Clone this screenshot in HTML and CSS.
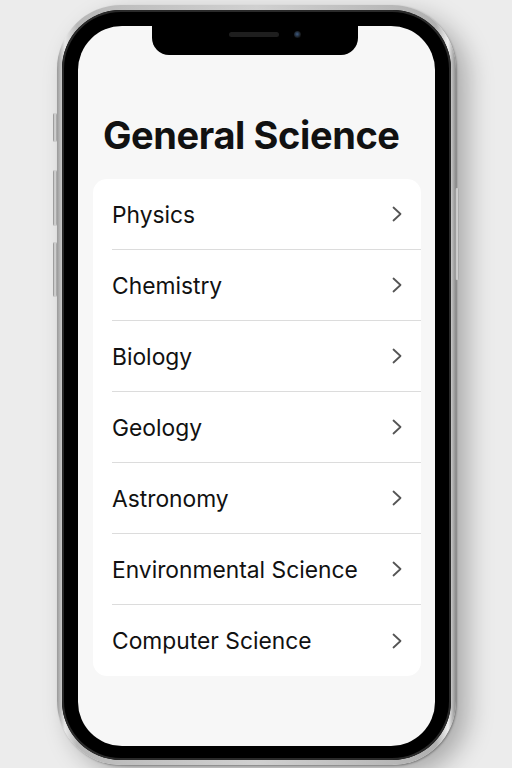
FILE: index.html
```html
<!DOCTYPE html>
<html lang="en">
  <head>
    <meta charset="UTF-8" />
    <meta name="viewport" content="width=device-width, initial-scale=1.0" />
    <title>General Science</title>
    <link rel="stylesheet" href="styles.css">
  </head>
  <body>
    <section class="phone">
      <span class="side-btn btn-mute"></span>
      <span class="side-btn btn-vol-up"></span>
      <span class="side-btn btn-vol-down"></span>
      <span class="side-btn btn-power"></span>
      <section class="bezel">
        <section class="screen">
          <div class="notch">
            <span class="speaker"></span>
            <span class="camera"></span>
          </div>
          <h1 class="title">General Science</h1>
          <ul class="list">
            <li class="row"><span>Physics</span><svg class="chev" viewBox="0 0 10 16"><path d="M1.5 1.5 L8.5 8 L1.5 14.5" /></svg></li>
            <li class="row"><span>Chemistry</span><svg class="chev" viewBox="0 0 10 16"><path d="M1.5 1.5 L8.5 8 L1.5 14.5" /></svg></li>
            <li class="row"><span>Biology</span><svg class="chev" viewBox="0 0 10 16"><path d="M1.5 1.5 L8.5 8 L1.5 14.5" /></svg></li>
            <li class="row"><span>Geology</span><svg class="chev" viewBox="0 0 10 16"><path d="M1.5 1.5 L8.5 8 L1.5 14.5" /></svg></li>
            <li class="row"><span>Astronomy</span><svg class="chev" viewBox="0 0 10 16"><path d="M1.5 1.5 L8.5 8 L1.5 14.5" /></svg></li>
            <li class="row"><span>Environmental Science</span><svg class="chev" viewBox="0 0 10 16"><path d="M1.5 1.5 L8.5 8 L1.5 14.5" /></svg></li>
            <li class="row"><span>Computer Science</span><svg class="chev" viewBox="0 0 10 16"><path d="M1.5 1.5 L8.5 8 L1.5 14.5" /></svg></li>
          </ul>
        </section>
      </section>
    </section>
  </body>
</html>
```

FILE: styles.css
```css
body {
  margin: 0;
  width: 512px;
  height: 768px;
  overflow: hidden;
  background: #ececec;
  font-family: Inter, "Noto Sans", sans-serif;
  display: flex;
  justify-content: center;
  padding-top: 5px;
  box-sizing: border-box;
}
.phone {
  position: relative;
  width: 399px;
  height: 760px;
  padding: 5px;
  box-sizing: border-box;
  border-radius: 64px;
  background: linear-gradient(90deg, #9a9a9a, #e8e8e8 2%, #b8b8b8 5%, #d0d0d0 50%, #b0b0b0 95%, #eeeeee 98%, #8a8a8a);
  box-shadow: 12px 10px 26px rgba(0, 0, 0, 0.28), 1px 1px 2px rgba(0, 0, 0, 0.3);
  margin-left: 1px;
}
.side-btn {
  position: absolute;
  width: 4px;
  background: linear-gradient(90deg, #888, #e0e0e0, #999);
  border-radius: 2px;
}
.btn-mute { left: -4px; top: 108px; height: 29px; }
.btn-vol-up { left: -4px; top: 165px; height: 56px; }
.btn-vol-down { left: -4px; top: 237px; height: 55px; }
.btn-power { right: -3px; top: 183px; height: 92px; }
.bezel {
  height: 100%;
  box-sizing: border-box;
  padding: 16px 16px 14px;
  background: #000;
  border-radius: 59px;
  box-shadow: inset 0 0 0 2px #2a2a2a;
}
.screen {
  position: relative;
  height: 100%;
  background: #f7f7f7;
  border-radius: 44px;
  overflow: hidden;
}
.notch {
  position: absolute;
  top: 0;
  left: 74px;
  width: 206px;
  height: 29px;
  background: #000;
  border-radius: 0 0 17px 17px;
}
.speaker {
  position: absolute;
  left: 77px;
  top: 6px;
  width: 50px;
  height: 5px;
  border-radius: 3px;
  background: #1e1e1e;
}
.camera {
  position: absolute;
  left: 142px;
  top: 5px;
  width: 7px;
  height: 7px;
  border-radius: 50%;
  background: radial-gradient(circle at 45% 45%, #3d5a80, #111 70%);
}
.title {
  margin: 86px 0 0 25px;
  font-size: 38px;
  line-height: 46px;
  font-weight: 700;
  color: #111;
  letter-spacing: -0.4px;
}
.list {
  list-style: none;
  margin: 21px 14px 0 15px;
  padding: 0;
  background: #fff;
  border-radius: 14px;
}
.row {
  height: 71px;
  box-sizing: border-box;
  margin-left: 19px;
  padding-right: 19px;
  display: flex;
  align-items: center;
  justify-content: space-between;
  font-size: 22.8px;
  color: #111;
  border-bottom: 1px solid #dcdcdc;
}
.row:last-child {
  border-bottom: none;
}
.chev {
  width: 10px;
  height: 16px;
  fill: none;
  stroke: #555;
  stroke-width: 1.8;
  stroke-linecap: round;
  stroke-linejoin: round;
}
```
